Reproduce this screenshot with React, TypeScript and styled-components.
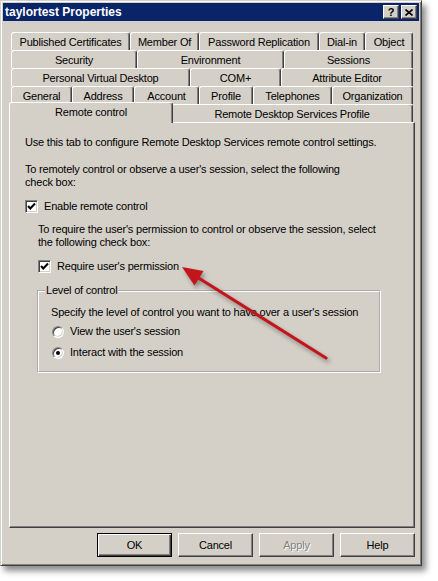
import styled, { createGlobalStyle } from "styled-components";

const GlobalStyle = createGlobalStyle`
  html, body {
    margin: 0;
    padding: 0;
    background: #fff;
  }
  body {
    font-family: "Liberation Sans", Arial, sans-serif;
    font-size: 11px;
    letter-spacing: -0.2px;
    color: #000;
  }
`;

const Stage = styled.div`
  position: relative;
  width: 438px;
  height: 581px;
  overflow: hidden;
`;

const Window = styled.div`
  width: 422px;
  height: 566px;
  box-sizing: border-box;
  background: #d4d0c8;
  border: 1px solid;
  border-color: #d4d0c8 #404040 #404040 #d4d0c8;
  box-shadow: inset 1px 1px #fff, inset -1px -1px #808080,
    4px 5px 6px rgba(0, 0, 0, 0.45);
  padding: 2px;
  display: flex;
  flex-direction: column;
`;

const TitleBar = styled.div`
  height: 18px;
  background: #0a246a;
  display: flex;
  align-items: center;
  justify-content: space-between;
  padding: 0 2px 0 2px;
`;

const Title = styled.span`
  color: #fff;
  font-weight: bold;
  font-size: 12px;
  letter-spacing: 0;
`;

const CaptionButtons = styled.div`
  display: flex;
  gap: 2px;
`;

const CaptionButton = styled.div`
  width: 16px;
  height: 14px;
  box-sizing: border-box;
  background: #d4d0c8;
  border: 1px solid;
  border-color: #fff #404040 #404040 #fff;
  box-shadow: inset -1px -1px #808080;
  display: flex;
  align-items: center;
  justify-content: center;
  font-weight: bold;
  font-size: 11px;
  line-height: 1;
`;

const Body = styled.div`
  padding: 11px 4px 0 6px;
  display: flex;
  flex-direction: column;
`;

const TabRows = styled.div`
  display: flex;
  flex-direction: column;
  margin: 0 2px;
`;

const TabRow = styled.div`
  display: flex;
  height: 18px;
  align-items: flex-end;
`;

const Tab = styled.div<{ $w: number; $active?: boolean }>`
  width: ${(p) => p.$w + (p.$active ? 4 : 0)}px;
  height: ${(p) => (p.$active ? 21 : 18)}px;
  margin: ${(p) => (p.$active ? "0 -2px -1px -2px" : "0")};
  position: ${(p) => (p.$active ? "relative" : "static")};
  z-index: ${(p) => (p.$active ? 2 : "auto")};
  box-sizing: border-box;
  flex-shrink: 0;
  background: #d4d0c8;
  border: 1px solid;
  border-bottom: none;
  border-color: #fff #404040 transparent #fff;
  border-radius: 3px 3px 0 0;
  box-shadow: inset -1px 0 #808080;
  display: flex;
  align-items: center;
  justify-content: center;
  padding-bottom: ${(p) => (p.$active ? 2 : 0)}px;
  white-space: nowrap;
`;

const Panel = styled.div`
  height: 406px;
  box-sizing: border-box;
  border: 1px solid;
  border-color: #fff #404040 #404040 #fff;
  box-shadow: inset -1px -1px #808080;
  padding: 13px 15px 0 15px;
  display: flex;
  flex-direction: column;
  line-height: 13px;
`;

const Para = styled.p<{ $gap?: number }>`
  margin: ${(p) => p.$gap ?? 0}px 0 0 0;
  white-space: nowrap;
`;

const Indent = styled.div`
  margin: 10px 0 0 13px;
  display: flex;
  flex-direction: column;
`;

const CheckRow = styled.label<{ $gap?: number }>`
  display: flex;
  align-items: center;
  gap: 6px;
  height: 13px;
  margin-top: ${(p) => p.$gap ?? 0}px;
`;

const CheckBox = styled.span`
  width: 13px;
  height: 13px;
  box-sizing: border-box;
  background: #fff;
  border: 1px solid;
  border-color: #808080 #fff #fff #808080;
  box-shadow: inset 1px 1px #404040, inset -1px -1px #d4d0c8;
  display: flex;
  align-items: center;
  justify-content: center;
  flex-shrink: 0;
`;

const GroupBox = styled.fieldset`
  margin: 11px 0 0 12px;
  width: 344px;
  box-sizing: border-box;
  min-width: 0;
  border: 2px groove #fff;
  padding: 9px 8px 12px 12px;
  display: flex;
  flex-direction: column;
`;

const Legend = styled.legend`
  margin-left: -6px;
  padding: 0 1px;
`;

const RadioRow = styled.label<{ $gap: number }>`
  display: flex;
  align-items: center;
  gap: 6px;
  height: 13px;
  margin: ${(p) => p.$gap}px 0 0 1px;
`;

const Radio = styled.span`
  width: 12px;
  height: 12px;
  box-sizing: border-box;
  border-radius: 50%;
  background: #fff;
  border: 1px solid;
  border-color: #808080 #fff #fff #808080;
  box-shadow: inset 1px 1px #404040, inset -1px -1px #d4d0c8;
  display: flex;
  align-items: center;
  justify-content: center;
  flex-shrink: 0;
`;

const Dot = styled.span`
  width: 4px;
  height: 4px;
  border-radius: 50%;
  background: #000;
`;

const ButtonBar = styled.div`
  display: flex;
  justify-content: flex-end;
  gap: 6px;
  margin-top: 5px;
`;

const Button = styled.div<{ $default?: boolean; $disabled?: boolean }>`
  width: 75px;
  height: 24px;
  box-sizing: border-box;
  border: 1px solid;
  border-color: ${(p) => (p.$default ? "#000" : "#fff #404040 #404040 #fff")};
  box-shadow: ${(p) =>
    p.$default
      ? "inset 1px 1px #fff, inset -1px -1px #404040, inset -2px -2px #808080"
      : "inset -1px -1px #808080"};
  display: flex;
  align-items: center;
  justify-content: center;
  color: ${(p) => (p.$disabled ? "#808080" : "#000")};
  text-shadow: ${(p) => (p.$disabled ? "1px 1px #fff" : "none")};
`;

const Arrow = styled.svg`
  position: absolute;
  left: 0;
  top: 0;
  pointer-events: none;
  filter: drop-shadow(2px 3px 2px rgba(0, 0, 0, 0.35));
`;

const tabRows: { label: string; w: number; active?: boolean }[][] = [
  [
    { label: "Published Certificates", w: 119 },
    { label: "Member Of", w: 69 },
    { label: "Password Replication", w: 120 },
    { label: "Dial-in", w: 46 },
    { label: "Object", w: 48 },
  ],
  [
    { label: "Security", w: 126 },
    { label: "Environment", w: 147 },
    { label: "Sessions", w: 129 },
  ],
  [
    { label: "Personal Virtual Desktop", w: 179 },
    { label: "COM+", w: 91 },
    { label: "Attribute Editor", w: 132 },
  ],
  [
    { label: "General", w: 61 },
    { label: "Address", w: 62 },
    { label: "Account", w: 65 },
    { label: "Profile", w: 54 },
    { label: "Telephones", w: 79 },
    { label: "Organization", w: 81 },
  ],
  [
    { label: "Remote control", w: 160, active: true },
    { label: "Remote Desktop Services Profile", w: 242 },
  ],
];

function Check() {
  return (
    <svg width="9" height="9" viewBox="0 0 9 9">
      <polyline points="1,4 3.3,6.5 8,1.5" fill="none" stroke="#000" strokeWidth="2" />
    </svg>
  );
}

function App() {
  return (
    <Stage>
      <GlobalStyle />
      <Window>
        <TitleBar>
          <Title>taylortest Properties</Title>
          <CaptionButtons>
            <CaptionButton>?</CaptionButton>
            <CaptionButton>
              <svg width="8" height="7" viewBox="0 0 8 7">
                <path d="M0.5 0.5 L7.5 6.5 M7.5 0.5 L0.5 6.5" stroke="#000" strokeWidth="1.6" />
              </svg>
            </CaptionButton>
          </CaptionButtons>
        </TitleBar>
        <Body>
          <TabRows>
            {tabRows.map((row, i) => (
              <TabRow key={i}>
                {row.map((t) => (
                  <Tab key={t.label} $w={t.w} $active={t.active}>
                    {t.label}
                  </Tab>
                ))}
              </TabRow>
            ))}
          </TabRows>
          <Panel>
            <Para>Use this tab to configure Remote Desktop Services remote control settings.</Para>
            <Para $gap={14}>
              To remotely control or observe a user's session, select the following
              <br />
              check box:
            </Para>
            <CheckRow $gap={11}>
              <CheckBox>
                <Check />
              </CheckBox>
              Enable remote control
            </CheckRow>
            <Indent>
              <Para>
                To require the user's permission to control or observe the session, select
                <br />
                the following check box:
              </Para>
              <CheckRow $gap={11}>
                <CheckBox>
                  <Check />
                </CheckBox>
                Require user's permission
              </CheckRow>
            </Indent>
            <GroupBox>
              <Legend>Level of control</Legend>
              <Para>Specify the level of control you want to have over a user's session</Para>
              <RadioRow $gap={6}>
                <Radio />
                View the user's session
              </RadioRow>
              <RadioRow $gap={8}>
                <Radio>
                  <Dot />
                </Radio>
                Interact with the session
              </RadioRow>
            </GroupBox>
          </Panel>
          <ButtonBar>
            <Button $default>OK</Button>
            <Button>Cancel</Button>
            <Button $disabled>Apply</Button>
            <Button>Help</Button>
          </ButtonBar>
        </Body>
      </Window>
      <Arrow width="438" height="581" viewBox="0 0 438 581">
        <line x1="326" y1="358" x2="197" y2="277" stroke="#c3161c" strokeWidth="3.2" strokeLinecap="round" />
        <polygon points="182,267 203.5,271 194.5,285.5" fill="#c3161c" />
      </Arrow>
    </Stage>
  );
}

export default App;
